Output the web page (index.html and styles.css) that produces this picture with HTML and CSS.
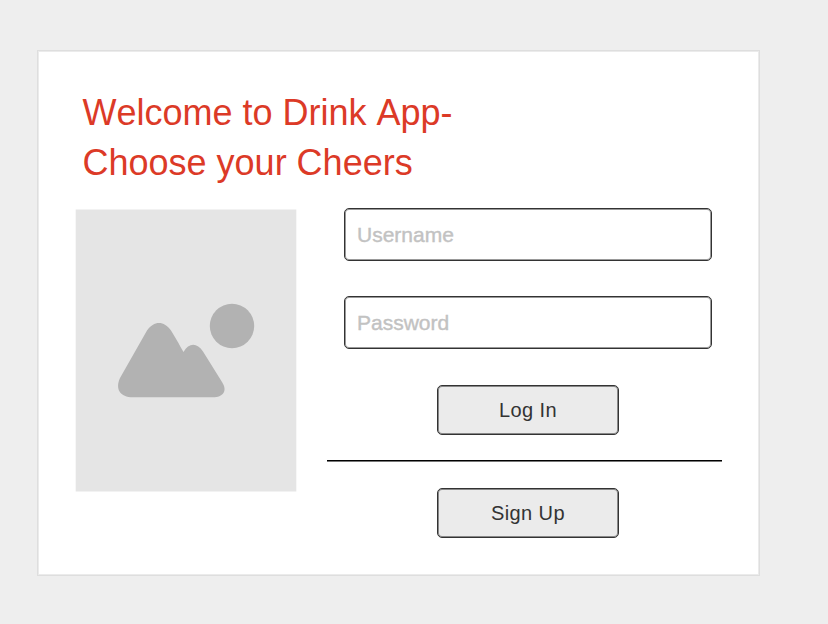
FILE: index.html
```html
<!DOCTYPE html>
<html lang="en">
<head>
<meta charset="utf-8">
<title>Drink App</title>
<link rel="stylesheet" href="styles.css">
</head>
<body>
<main class="card">
  <h1 class="title">Welcome to Drink App-<br>Choose your Cheers</h1>
  <div class="content">
    <svg class="picture" viewBox="0 0 221 283" aria-hidden="true">
      <rect class="picture-bg" x="-0.3" y="0.5" width="220.6" height="282"/>
      <circle cx="156" cy="117" r="22.2"/>
      <path d="M71 121.500 C78 111.500 88 111.500 95 121.500 C98 126 103 135 107.500 143 C113 133.500 121 133.500 127 142.500 L146 173 C152 182 147 188.300 137 188.300 L57 188.300 C44 188.300 39 180 44 169 Z"/>
    </svg>
    <form class="form">
      <input class="field" type="text" placeholder="Username" aria-label="Username">
      <input class="field" type="password" placeholder="Password" aria-label="Password">
      <button class="button" type="button">Log In</button>
      <hr class="divider">
      <button class="button" type="button">Sign Up</button>
    </form>
  </div>
</main>
</body>
</html>
```

FILE: styles.css
```css
* { box-sizing: border-box; }
body {
  margin: 0;
  padding: 50px 0 0 37px;
  height: 624px;
  background: #eee;
  font-family: "Liberation Sans", Arial, sans-serif;
}
.card {
  width: 723px;
  height: 526px;
  padding: 37px 0 0 37px;
  background: #fff;
  border: 1px solid #dedede;
  box-shadow: inset 0 0 0 1px #ebebeb;
}
.title {
  margin: 0 0 0 7.5px;
  font-size: 36px;
  font-weight: 400;
  line-height: 50px;
  font-kerning: none;
  color: #dc3a27;
}
.content { display: flex; gap: 31px; margin-top: 20px; }
.picture {
  width: 221px;
  height: 283px;
  margin: 1px 0 0 1px;
  overflow: visible;
  fill: #b2b2b2;
}
.picture-bg { fill: #e5e5e5; }
.form {
  display: flex;
  flex-direction: column;
  align-items: center;
  width: 395px;
  margin-left: -1px;
}
.field {
  width: 368px;
  height: 53px;
  margin: 0 0 35px 7px;
  padding: 0 12px;
  border: 1px solid #333;
  border-radius: 5px;
  box-shadow: inset 0 0 0 1px #999;
  background: #fff;
  font: 21px "Liberation Sans", Arial, sans-serif;
}
.field::placeholder {
  color: #c2c2c2;
  opacity: 1;
  -webkit-text-stroke: 0.4px #c2c2c2;
}
.button {
  width: 182px;
  height: 50px;
  margin: 0 0 0 7px;
  padding: 0;
  border: 1px solid #333;
  border-radius: 5px;
  box-shadow: inset 0 0 0 1px #888;
  background: #ebebeb;
  color: #333;
  font: 20px "Liberation Sans", Arial, sans-serif;
  letter-spacing: 0.4px;
}
.field + .button { margin-top: 1px; }
.divider {
  width: 100%;
  height: 2px;
  margin: 25px 0 26px;
  border: 0;
  background: linear-gradient(#000 50%, #777 50%);
}
```
